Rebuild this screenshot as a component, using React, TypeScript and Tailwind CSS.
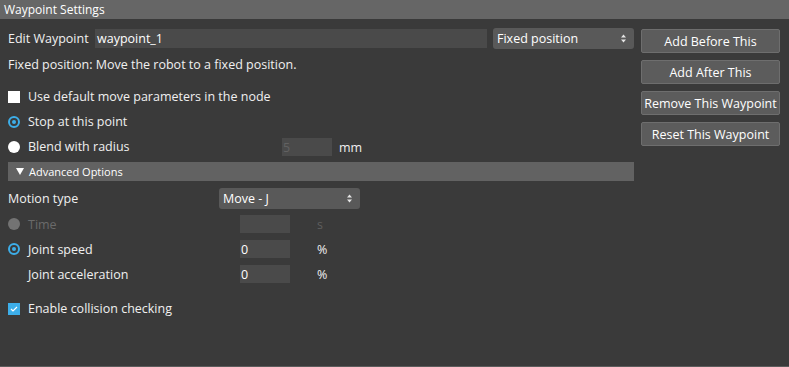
import React from 'react';

const FONT = { fontFamily: '"Open Sans", "Noto Sans", sans-serif' };

// small up/down arrows at the right of the combo boxes
const Spinner = () => (
  <svg width="5" height="9" viewBox="0 0 5 9" className="shrink-0">
    <path d="M2.5 0.5 L5 3.5 L0 3.5 Z" fill="#e6e6e6" />
    <path d="M0 5.5 L5 5.5 L2.5 8.5 Z" fill="#e6e6e6" />
  </svg>
);

const Select = ({ value, className }: { value: string; className: string }) => (
  <div className={`flex items-center justify-between rounded-[3px] bg-[#595959] pl-[4px] pr-[8px] text-white ${className}`}>
    <span className="pt-[2px]">{value}</span>
    <Spinner />
  </div>
);

const Field = ({ value, dim }: { value: string; dim?: boolean }) => (
  <div className={`flex h-[18px] w-[50px] items-center bg-[#4a4a4a] pl-[1px] pt-[2px] ${dim ? 'text-[#626262]' : 'text-white'}`}>
    {value}
  </div>
);

const Radio = ({ checked, disabled }: { checked?: boolean; disabled?: boolean }) =>
  checked ? (
    <span className="flex h-[12px] w-[12px] items-center justify-center rounded-full border-[2px] border-[#3daee9]">
      <span className="h-[4px] w-[4px] rounded-full bg-[#3daee9]" />
    </span>
  ) : (
    <span className={`h-[12px] w-[12px] rounded-full ${disabled ? 'bg-[#737373]' : 'bg-white'}`} />
  );

const BUTTONS = ['Add Before This', 'Add After This', 'Remove This Waypoint', 'Reset This Waypoint'];

export default function App() {
  return (
    <div className="flex h-[367px] w-[789px] flex-col bg-[#3a3a3a] text-[12.5px] text-[#f0f0f0]" style={FONT}>
      {/* title */}
      <div className="flex h-[19px] items-center bg-[#666666] pl-[4px] text-[12px] text-white">Waypoint Settings</div>

      <div className="flex flex-1 border-b border-[#5c5c5c]">
        {/* left column */}
        <div className="flex w-[634px] flex-col pl-[8px] pt-[9px]">
          <div className="flex h-[21px] items-center">
            <span className="w-[87px] pt-[2px]">Edit Waypoint</span>
            <div className="flex h-[19px] w-[392px] items-center bg-[#4a4a4a] pl-[2px] pt-[2px] text-white">waypoint_1</div>
            <Select value="Fixed position" className="ml-[6px] h-[21px] w-[141px]" />
          </div>

          <div className="mt-[5px] flex h-[20px] items-center pt-[2px]">Fixed position: Move the robot to a fixed position.</div>

          <div className="mt-[13px] flex h-[20px] items-center gap-[8px]">
            <span className="h-[12px] w-[12px] bg-white" />
            <span className="pt-[1px]">Use default move parameters in the node</span>
          </div>

          <div className="mt-[5px] flex h-[20px] items-center gap-[8px]">
            <Radio checked />
            <span className="pt-[1px]">Stop at this point</span>
          </div>

          <div className="mt-[5px] flex h-[20px] items-center">
            <div className="flex w-[274px] items-center gap-[8px]">
              <Radio />
              <span className="pt-[1px]">Blend with radius</span>
            </div>
            <Field value="5" dim />
            <span className="ml-[7px] pt-[2px]">mm</span>
          </div>

          <div className="mt-[5px] flex h-[19px] items-center gap-[5px] bg-[#626262] pl-[8px] text-[11px] text-white">
            <svg width="8" height="7" viewBox="0 0 8 7">
              <path d="M0 0 L8 0 L4 7 Z" fill="#ffffff" />
            </svg>
            <span className="pt-[1px]">Advanced Options</span>
          </div>

          <div className="mt-[7px] flex h-[21px] items-center">
            <span className="w-[211px] pt-[2px]">Motion type</span>
            <Select value="Move - J" className="h-[21px] w-[141px]" />
          </div>

          <div className="mt-[6px] flex h-[18px] items-center">
            <div className="flex w-[232px] items-center gap-[8px] text-[#6a6a6a]">
              <Radio disabled />
              <span className="pt-[2px]">Time</span>
            </div>
            <Field value="" />
            <span className="ml-[27px] pt-[2px] text-[#5e5e5e]">s</span>
          </div>

          <div className="mt-[7px] flex h-[18px] items-center">
            <div className="flex w-[232px] items-center gap-[8px]">
              <Radio checked />
              <span className="pt-[2px]">Joint speed</span>
            </div>
            <Field value="0" />
            <span className="ml-[27px] pt-[2px]">%</span>
          </div>

          <div className="mt-[7px] flex h-[18px] items-center">
            <span className="w-[232px] pl-[20px] pt-[2px]">Joint acceleration</span>
            <Field value="0" />
            <span className="ml-[27px] pt-[2px]">%</span>
          </div>

          <div className="mt-[16px] flex h-[20px] items-center gap-[8px]">
            <span className="flex h-[12px] w-[12px] items-center justify-center bg-[#3daee9]">
              <svg width="8" height="6" viewBox="0 0 8 6">
                <path d="M1 3 L3 5 L7 1" stroke="#ffffff" strokeWidth="1.2" fill="none" />
              </svg>
            </span>
            <span className="pt-[1px]">Enable collision checking</span>
          </div>
        </div>

        {/* right column */}
        <div className="ml-[7px] flex w-[139px] flex-col gap-[7px] pt-[10px]">
          {BUTTONS.map((b) => (
            <div
              key={b}
              className="flex h-[24px] items-center justify-center whitespace-nowrap rounded-[2px] border border-[#6e6e6e] bg-[#5c5c5c] pt-[2px] text-white"
            >
              {b}
            </div>
          ))}
        </div>
      </div>
    </div>
  );
}
